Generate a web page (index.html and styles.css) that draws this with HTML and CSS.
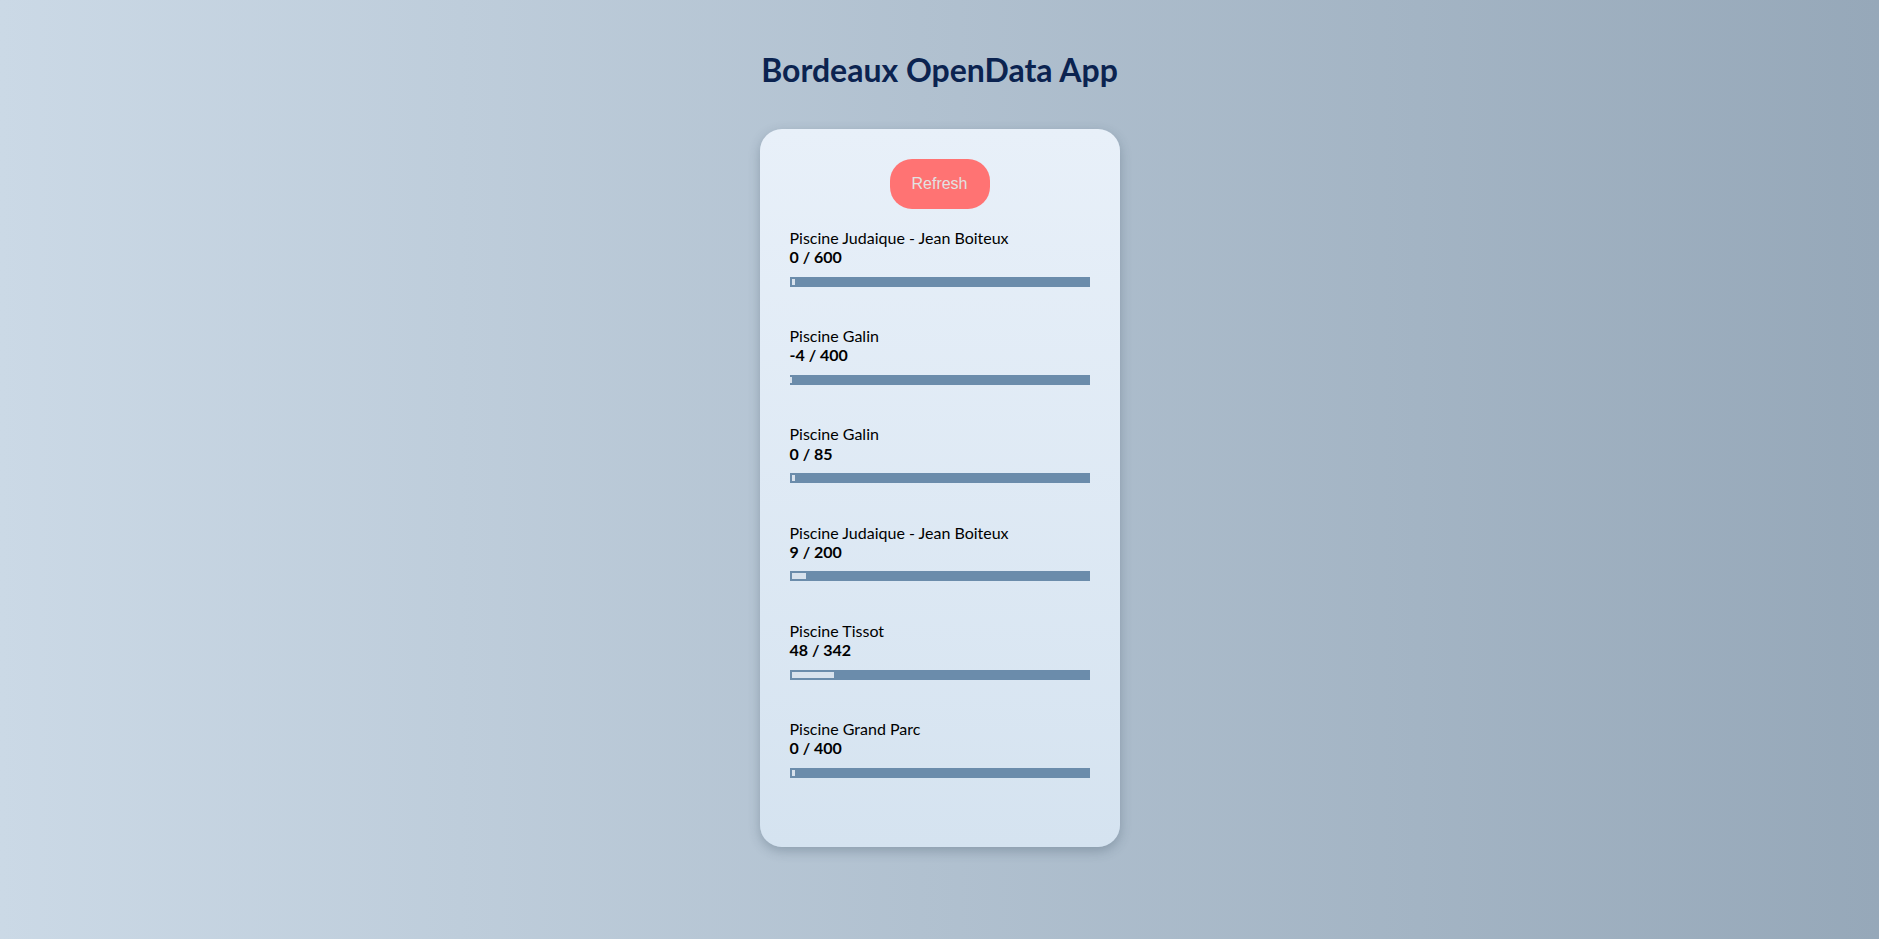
FILE: index.html
```html
<!DOCTYPE html>
<html lang="fr">
<head>
<meta charset="utf-8">
<title>Bordeaux OpenData App</title>
<link rel="stylesheet" href="styles.css">
</head>
<body>
<main class="page">
  <h1 class="title">Bordeaux OpenData App</h1>
  <section class="card">
    <button class="refresh" type="button">Refresh</button>
    <ul class="pools">
      <li class="pool">
        <div class="pool-name">Piscine Judaique - Jean Boiteux</div>
        <div class="pool-count">0 / 600</div>
        <div class="bar"><div class="fill" style="width:3px"></div></div>
      </li>
      <li class="pool">
        <div class="pool-name">Piscine Galin</div>
        <div class="pool-count">-4 / 400</div>
        <div class="bar bar-neg"><div class="fill" style="width:2px"></div></div>
      </li>
      <li class="pool">
        <div class="pool-name">Piscine Galin</div>
        <div class="pool-count">0 / 85</div>
        <div class="bar"><div class="fill" style="width:3px"></div></div>
      </li>
      <li class="pool">
        <div class="pool-name">Piscine Judaique - Jean Boiteux</div>
        <div class="pool-count">9 / 200</div>
        <div class="bar"><div class="fill" style="width:14px"></div></div>
      </li>
      <li class="pool">
        <div class="pool-name">Piscine Tissot</div>
        <div class="pool-count">48 / 342</div>
        <div class="bar"><div class="fill" style="width:42px"></div></div>
      </li>
      <li class="pool">
        <div class="pool-name">Piscine Grand Parc</div>
        <div class="pool-count">0 / 400</div>
        <div class="bar"><div class="fill" style="width:3px"></div></div>
      </li>
    </ul>
  </section>
</main>
</body>
</html>
```

FILE: styles.css
```css
html, body {
  margin: 0;
  padding: 0;
}

body {
  min-height: 100vh;
  background: linear-gradient(to right, #cbd9e6 0%, #96a8b9 100%);
  font-family: Lato, "Noto Sans", sans-serif;
  color: #000;
}

.page {
  display: flex;
  flex-direction: column;
  align-items: center;
  padding-top: 50px;
}

.title {
  margin: 0 0 40px;
  font-size: 32px;
  font-weight: 700;
  line-height: normal;
  color: #0b2350;
}

.card {
  box-sizing: border-box;
  width: 360px;
  padding: 30px;
  border-radius: 22px;
  background: linear-gradient(to bottom, #e8f0f9 0%, #d5e3f0 100%);
  box-shadow: 0 4px 12px rgba(40, 60, 80, 0.28);
  display: flex;
  flex-direction: column;
}

.refresh {
  align-self: center;
  width: 100px;
  height: 50px;
  margin: 0 0 19px;
  border: none;
  border-radius: 22px;
  background: #ff7373;
  color: #e2e2e2;
  font-family: "Liberation Sans", Arial, sans-serif;
  font-size: 16px;
  padding: 0;
}

.pools {
  list-style: none;
  margin: 0;
  padding: 0;
}

.pool {
  padding-bottom: 39.5px;
}

.pool-name {
  font-size: 16px;
  line-height: 19.2px;
}

.pool-count {
  font-size: 16px;
  font-weight: 700;
  line-height: 19.2px;
}

.bar {
  margin-top: 10.3px;
  height: 10px;
  box-sizing: border-box;
  padding: 2px;
  background: #6b8cab;
}

.bar-neg {
  padding-left: 0;
}

.fill {
  height: 6px;
  background: #d8e2ed;
}
```
